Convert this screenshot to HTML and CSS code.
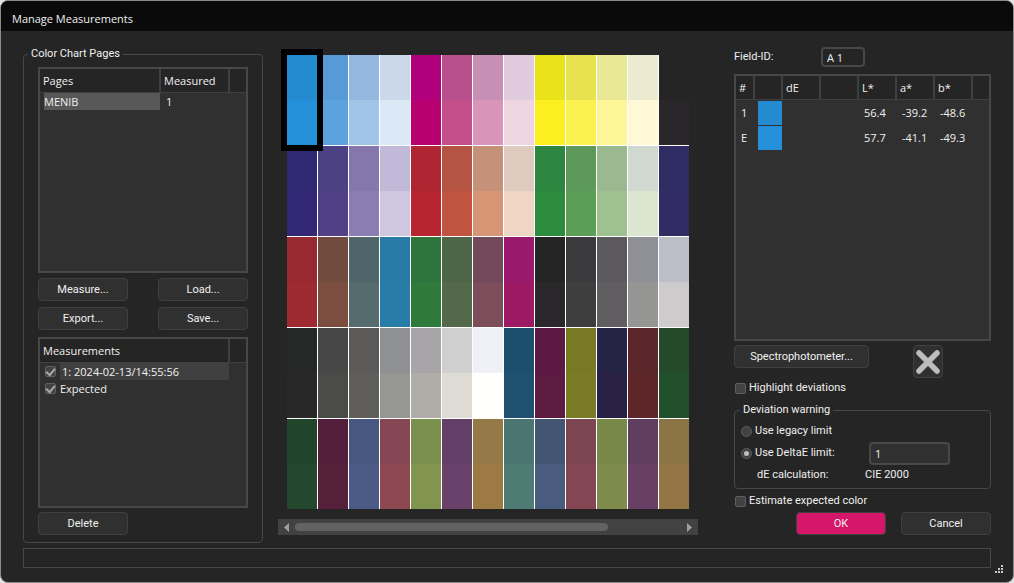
FILE: index.html
```html
<!DOCTYPE html>
<html lang="en">
<head>
    <meta charset="UTF-8">
    <meta name="viewport" content="width=device-width, initial-scale=1.0">
    <title>Manage Measurements</title>
    <link rel="stylesheet" href="styles.css">
</head>
<body>

    <div class="window">
        <header class="titlebar">
            <h1>Manage Measurements</h1>
        </header>

        <main class="content">
            <fieldset class="group pages">
                <legend>Color Chart Pages</legend>

                <div class="list list-pages">
                    <table>
                        <colgroup>
                            <col class="col-name">
                            <col class="col-measured">
                            <col>
                        </colgroup>
                        <thead>
                            <tr><th>Pages</th><th>Measured</th><th></th></tr>
                        </thead>
                        <tbody>
                            <tr><td><span class="selected">MENIB</span></td><td class="value">1</td><td></td></tr>
                        </tbody>
                    </table>
                </div>

                <div class="button-grid">
                    <button type="button">Measure...</button>
                    <button type="button">Load...</button>
                    <button type="button">Export...</button>
                    <button type="button">Save...</button>
                </div>

                <div class="list list-measurements">
                    <table>
                        <colgroup>
                            <col class="col-measurement">
                            <col>
                        </colgroup>
                        <thead>
                            <tr><th>Measurements</th><th></th></tr>
                        </thead>
                        <tbody>
                            <tr><td><label class="item"><input type="checkbox" checked><span class="item-text current">1: 2024-02-13/14:55:56</span></label></td><td></td></tr>
                            <tr><td><label class="item"><input type="checkbox" checked><span class="item-text">Expected</span></label></td><td></td></tr>
                        </tbody>
                    </table>
                </div>

                <button type="button" class="delete">Delete</button>
            </fieldset>

            <section class="chart-area">
                <div class="chart" id="chart"></div>
                <div class="scrollbar">
                    <button type="button" class="arrow" aria-label="Scroll left">
                        <svg width="5" height="9" viewBox="0 0 5 9"><path d="M5 0v9L0 4.500z" fill="#a0a0a0"/></svg>
                    </button>
                    <div class="track"><div class="thumb"></div></div>
                    <button type="button" class="arrow" aria-label="Scroll right">
                        <svg width="5" height="9" viewBox="0 0 5 9"><path d="M0 0v9l5-4.500z" fill="#a0a0a0"/></svg>
                    </button>
                </div>
            </section>

            <section class="details">
                <div class="field-row">
                    <label for="field-id">Field-ID:</label>
                    <input type="text" id="field-id" class="field-id" value="A 1" readonly>
                </div>

                <div class="list list-values">
                    <table>
                        <colgroup>
                            <col class="col-number">
                            <col class="col-swatch">
                            <col class="col-value">
                            <col class="col-value">
                            <col class="col-value">
                            <col class="col-value">
                            <col class="col-value">
                            <col>
                        </colgroup>
                        <thead>
                            <tr><th>#</th><th></th><th>dE</th><th></th><th>L*</th><th>a*</th><th>b*</th><th></th></tr>
                        </thead>
                        <tbody>
                            <tr><td>1</td><td><div class="swatch measured"></div></td><td></td><td></td><td>56.4</td><td>-39.2</td><td>-48.6</td><td></td></tr>
                            <tr><td>E</td><td><div class="swatch expected"></div></td><td></td><td></td><td>57.7</td><td>-41.1</td><td>-49.3</td><td></td></tr>
                        </tbody>
                    </table>
                </div>

                <div class="device-row">
                    <button type="button" class="device">Spectrophotometer...</button>
                    <button type="button" class="disconnect" aria-label="Disconnect">
                        <svg width="26" height="26" viewBox="0 0 26 26"><path d="M4 4l18 18M22 4L4 22" stroke="#bdbdbd" stroke-width="5.500" stroke-linecap="round"/></svg>
                    </button>
                </div>

                <label class="check"><input type="checkbox">Highlight deviations</label>

                <fieldset class="group warning">
                    <legend>Deviation warning</legend>
                    <label class="check"><input type="radio" name="limit">Use legacy limit</label>
                    <div class="limit-row">
                        <label class="check"><input type="radio" name="limit" checked>Use DeltaE limit:</label>
                        <input type="text" class="limit" value="1" aria-label="DeltaE limit">
                    </div>
                    <div class="calc-row">
                        <span>dE calculation:</span>
                        <span>CIE 2000</span>
                    </div>
                </fieldset>

                <label class="check"><input type="checkbox">Estimate expected color</label>

                <div class="actions">
                    <button type="button" class="primary">OK</button>
                    <button type="button">Cancel</button>
                </div>
            </section>
        </main>

        <footer class="statusbar"></footer>

        <svg class="grip" width="8" height="8" viewBox="0 0 8 8"><path d="M6 0h2v2h-2zM3 3h2v2h-2zM6 3h2v2h-2zM0 6h2v2h-2zM3 6h2v2h-2zM6 6h2v2h-2z" fill="#c8c8c8"/></svg>
    </div>

    <script src="script.js"></script>
</body>
</html>
```

FILE: styles.css
```css
* {
    box-sizing: border-box;
}

body {
    margin: 0;
    background-color: #e4e4e4;
    color: #f0f0f0;
    font-family: 'Roboto', sans-serif;
    font-size: 11px;
    line-height: 16px;
}

.window {
    position: relative;
    display: flex;
    flex-direction: column;
    min-height: 100vh;
    background-color: #252525;
    border: 1px solid #8a8a8a;
    border-radius: 8px;
    overflow: hidden;
}

.titlebar {
    background-color: #0a0a0a;
    height: 30px;
    padding: 10px 11px 0;
}

h1 {
    margin: 0;
    font-family: 'Open Sans', sans-serif;
    font-size: 11px;
    font-weight: 400;
    line-height: 16px;
}

.content {
    flex: 1;
    display: flex;
    justify-content: space-between;
    padding: 15px 22px 0;
}

/* group boxes */
.group {
    margin: 0;
    min-width: 0;
    border: 1px solid #484848;
    border-radius: 4px;
}

legend {
    padding: 0 3px;
    line-height: 16px;
}

.pages {
    display: flex;
    flex-direction: column;
    width: 240px;
    padding: 5px 14px 7px;
}

.pages legend {
    margin-left: -10px;
}

/* list views */
.list {
    background-color: #303030;
    border: 2px solid #484848;
    font-family: 'Open Sans', sans-serif;
    font-size: 11px;
}

.list-pages {
    height: 206px;
}

.list-measurements {
    flex: 1;
    margin-top: 7px;
}

table {
    width: 100%;
    table-layout: fixed;
    border-collapse: separate;
    border-spacing: 0;
}

th {
    height: 24px;
    padding: 0 0 0 3px;
    background-color: #252525;
    border-right: 2px solid #404040;
    border-bottom: 1px solid #404040;
    font-weight: 400;
    text-align: left;
}

th:last-child {
    border-right: none;
}

td {
    height: 17px;
    padding: 0;
    line-height: 17px;
}

.col-name {
    width: 121px;
}

.col-measured {
    width: 69px;
}

.col-measurement {
    width: 190px;
}

.selected {
    display: block;
    margin: 0 1px 0 4px;
    background-color: #585858;
}

.value {
    padding-left: 5px;
}

.item {
    display: flex;
    align-items: center;
    gap: 4px;
    padding: 0 1px 0 5px;
}

.item-text {
    flex: 1;
    white-space: nowrap;
}

.item-text.current {
    padding-left: 2px;
    background-color: #404040;
}

/* buttons */
button {
    width: 90px;
    height: 23px;
    padding: 0;
    background-color: #303030;
    border: 1px solid #404040;
    border-radius: 4px;
    color: #f0f0f0;
    font-family: inherit;
    font-size: 11px;
    line-height: 16px;
}

.button-grid {
    display: grid;
    grid-template-columns: auto auto;
    justify-content: space-between;
    row-gap: 6px;
    margin-top: 5px;
}

.delete {
    margin-top: 4px;
}

/* colour chart */
.chart-area {
    display: flex;
    flex-direction: column;
    width: 420px;
    margin-right: 21px;
}

.chart {
    display: grid;
    grid-template-columns: repeat(13, 30px);
    grid-auto-rows: 90px;
    gap: 1px;
    width: 402px;
    margin: 9px 9px 0;
    background-color: #fff;
}

.patch {
    display: grid;
    grid-template-rows: 1fr 1fr;
}

.patch.active {
    position: relative;
    outline: 6px solid #000;
}

.scrollbar {
    display: flex;
    align-items: center;
    height: 16px;
    margin-top: 10px;
    padding: 0 6px;
    background-color: #424242;
}

.arrow {
    display: flex;
    width: 5px;
    height: 9px;
    background: none;
    border: none;
    border-radius: 0;
}

.track {
    flex: 1;
    margin: 0 6px;
}

.thumb {
    width: 81%;
    height: 8px;
    background-color: #626262;
    border-radius: 4px;
}

/* details */
.details {
    display: flex;
    flex-direction: column;
    width: 257px;
}

input {
    margin: 0;
    color: #f0f0f0;
    font-family: 'Open Sans', sans-serif;
    font-size: 11px;
}

input[type="text"] {
    background-color: #303030;
    border: 2px solid #484848;
    border-radius: 4px;
    padding: 0 4px;
}

.field-row {
    display: flex;
    align-items: center;
    height: 22px;
}

.field-row label {
    width: 87px;
}

input.field-id {
    width: 44px;
    height: 20px;
    background-color: #252525;
}

.list-values {
    height: 267px;
    margin-top: 6px;
}

.list-values td {
    height: 25px;
    padding-left: 5px;
}

.list-values td:nth-child(2) {
    padding-left: 3px;
}

.col-number {
    width: 19px;
}

.col-swatch {
    width: 28px;
}

.col-value {
    width: 38px;
}

.swatch {
    width: 24px;
    height: 24px;
}

.swatch.measured {
    background-color: #258bd1;
}

.swatch.expected {
    background-color: #2590da;
}

.device-row {
    display: flex;
    gap: 44px;
    margin-top: 4px;
}

.device {
    width: 135px;
}

.disconnect {
    display: flex;
    align-items: center;
    justify-content: center;
    width: 30px;
    height: 33px;
}

.check {
    display: flex;
    align-items: center;
    gap: 3px;
}

.device-row + .check {
    margin: 2px 0 0 1px;
}

input[type="checkbox"],
input[type="radio"] {
    appearance: none;
    flex: none;
    display: grid;
    place-items: center;
    width: 11px;
    height: 11px;
    background-color: #424242;
    border: 1px solid #606060;
    border-radius: 2px;
}

input[type="radio"] {
    border-radius: 50%;
}

input[type="checkbox"]:checked::before {
    content: "";
    width: 7px;
    height: 4px;
    margin-bottom: 2px;
    border: solid #a8a8a8;
    border-width: 0 0 2px 2px;
    transform: rotate(-50deg);
}

input[type="radio"]:checked::before {
    content: "";
    width: 5px;
    height: 5px;
    border-radius: 50%;
    background-color: #c0c0c0;
}

.warning {
    margin-top: 6px;
    padding: 5px 6px;
}

.warning legend {
    margin-left: -1px;
}

.limit-row {
    display: flex;
    align-items: center;
    justify-content: space-between;
    height: 28px;
    padding-right: 34px;
}

input.limit {
    width: 81px;
    height: 23px;
}

.calc-row {
    display: grid;
    grid-template-columns: 108px 1fr;
    padding-left: 16px;
}

.warning + .check {
    margin: 4px 0 0 1px;
}

.actions {
    display: flex;
    justify-content: flex-end;
    gap: 15px;
    margin-top: 3px;
}

button.primary {
    background-color: #d61668;
}

.statusbar {
    height: 20px;
    margin: 5px 22px 14px;
    border: 1px solid #484848;
}

.grip {
    position: absolute;
    right: 10px;
    bottom: 9px;
}
```

FILE: script.js
```javascript
// Each row: measured colours on top, expected colours below
const rows = [
    {
        measured: ['258bd1', '569ad6', '95b8e0', 'cad8ea', 'b1007c', 'b84f8d', 'c88fb4', 'dfcbdd', 'e8e31a', 'e8e250', 'e9e894', 'ecebd1', '252525'],
        expected: ['2590da', '5ba2de', 'a0c5e9', 'dbe8f5', 'b90070', 'c24f88', 'd895b9', 'eed6e1', 'fbef1f', 'fbf250', 'fdf597', 'fff9d8', '2a272a']
    },
    {
        measured: ['2f2a72', '4c4183', '8576ac', 'c0bad8', 'af2632', 'b45544', 'c69179', 'decabf', '2d863f', '5c995b', '9ab990', 'cfd9cf', '2e2c62'],
        expected: ['332876', '514085', '8b7cb1', 'cfc6df', 'b62530', 'c05440', 'd69575', 'efd5c4', '2d8b3e', '5c9e56', '9fc190', 'dbe6d0', '322c65']
    },
    {
        measured: ['982933', '724b3f', '50656a', '287ba6', '2e753d', '4e6648', '72495a', '99196c', '252525', '3b3a3c', '5b595e', '8f9095', 'bebec8'],
        expected: ['9d2931', '7b4e40', '556b6d', '287ca8', '2e7a3a', '53694a', '7c4d5b', '9d1963', '2a282b', '3f3e3f', '605e61', '959594', 'cdcbcc']
    },
    {
        measured: ['252827', '474747', '5b5a58', '8f9092', 'a8a5a8', 'cfcfd0', 'f0f0f7', '1b4f6d', '5d1944', '777923', '252345', '5b262a', '234a2a'],
        expected: ['282828', '4b4b48', '5f5e5c', '969693', 'b0ada9', 'dddbd4', 'fffffd', '1f5070', '5e1b41', '7b7b25', '292145', '5e2628', '23502c']
    },
    {
        measured: ['20452a', '531f3b', '465780', '864654', '7c904e', '633f68', '957a47', '4b7570', '445573', '7b4551', '788849', '603e60', '8b7546'],
        expected: ['24482d', '561f3a', '4b5b86', '8d4852', '82954e', '6a416b', '9d7a43', '4e7b74', '495b7e', '854653', '7f8b4a', '693f65', '937643']
    }
];

const chart = document.getElementById('chart');

rows.forEach((row, r) => {
    row.measured.forEach((color, c) => {
        const patch = document.createElement('div');
        patch.className = r === 0 && c === 0 ? 'patch active' : 'patch';

        [color, row.expected[c]].forEach(value => {
            const half = document.createElement('div');
            half.style.backgroundColor = '#' + value;
            patch.appendChild(half);
        });

        chart.appendChild(patch);
    });
});
```
